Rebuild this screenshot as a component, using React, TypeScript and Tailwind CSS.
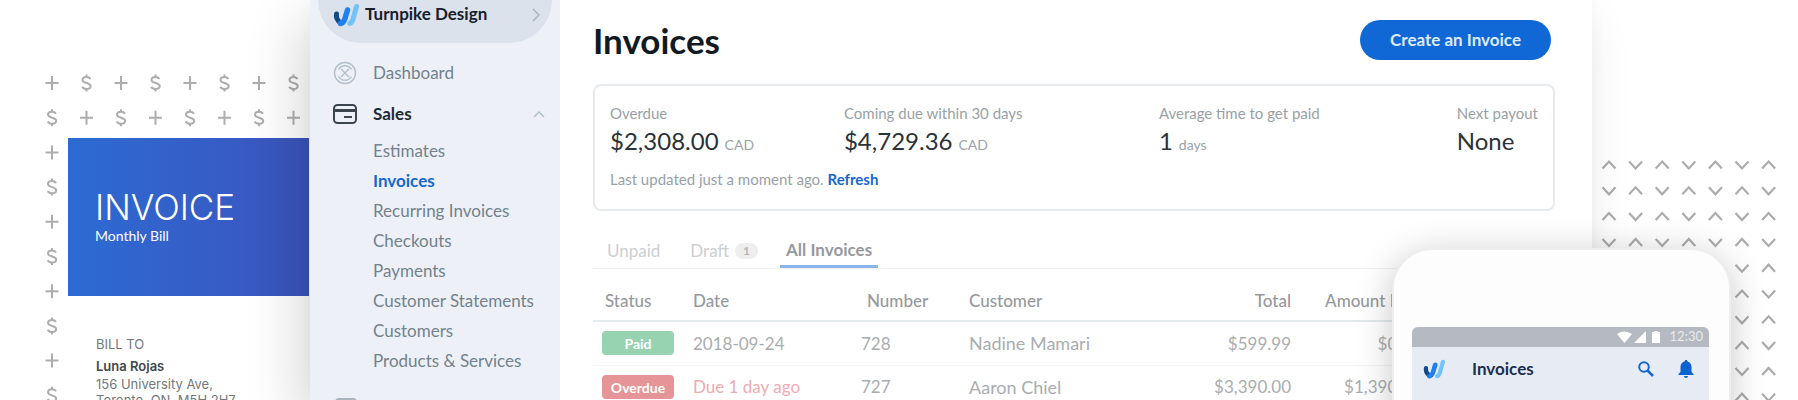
import React from "react";

const COIN_ROWS = 12;
const COIN_COLS = 8;
const ARROW_ROWS = 11;
const ARROW_COLS = 7;

function CoinPattern() {
  const cells = [];
  for (let r = 0; r < COIN_ROWS; r++) {
    for (let c = 0; c < COIN_COLS; c++) {
      const x = 12 + c * 34.5;
      const y = 12 + r * 34.7;
      const plus = (r + c) % 2 === 0;
      cells.push(
        plus ? (
          <path key={`${r}-${c}`} d={`M${x - 6.5} ${y}h13M${x} ${y - 7}v14`} />
        ) : (
          <path
            key={`${r}-${c}`}
            d={`M${x + 4} ${y - 4}c-1-1.6-2.4-2-4-2c-2.400 0-4 1.100-4 2.900c0 4 8.200 2.300 8.200 6.200c0 2-1.800 3-4.200 3c-1.900 0-3.400-.7-4.300-2.300M${x} ${y - 8.500}v2.500M${x} ${y + 6}v2.500`}
          />
        ),
      );
    }
  }
  return (
    <svg width="270" height="400" viewBox="0 0 270 400" fill="none" stroke="#adadad" strokeWidth="2" aria-hidden="true">
      {cells}
    </svg>
  );
}

function ArrowPattern() {
  const cells = [];
  for (let r = 0; r < ARROW_ROWS; r++) {
    for (let c = 0; c < ARROW_COLS; c++) {
      const x = 9 + c * 26.6;
      const y = 8 + r * 25.8;
      const dy = (r + c) % 2 === 0 ? -7 : 7;
      cells.push(<path key={`${r}-${c}`} d={`M${x - 6.5} ${y - dy / 2}l6.500 ${dy}l6.500 ${-dy}`} />);
    }
  }
  return (
    <svg width="180" height="280" viewBox="0 0 180 280" fill="none" stroke="#acacac" strokeWidth="2.200" aria-hidden="true">
      {cells}
    </svg>
  );
}

function WaveLogo({ className }: { className: string }) {
  return (
    <svg className={className} viewBox="0 0 28 26" fill="none" strokeLinecap="round" aria-hidden="true">
      <path d="M4.500 12c-.5 3 .5 6 3.500 8.500" stroke="#124a86" strokeWidth="5" />
      <path d="M24.500 4.500l-3.300 12c-.8 2.800-1.700 4.400-3.400 5" stroke="#74c2fa" strokeWidth="5" />
      <path d="M15.500 8l-2.700 9c-.8 2.500-2 4.100-4.300 4.500" stroke="#2180f0" strokeWidth="5.500" />
    </svg>
  );
}

const salesLinks = [
  "Estimates",
  "Invoices",
  "Recurring Invoices",
  "Checkouts",
  "Payments",
  "Customer Statements",
  "Customers",
  "Products & Services",
];

function Sidebar() {
  return (
    <nav className="h-full w-[250px] shrink-0 bg-[#edf1f7] px-2 text-[17px] text-[#73828c]">
      <button className="flex h-[43px] w-full items-start rounded-b-full bg-[#dbe2ec] pr-3 pl-[14px] text-left">
        <WaveLogo className="mt-[2px] h-[26px] w-7" />
        <span className="ml-[5px] grow leading-7 font-bold text-[#15202b]">Turnpike Design</span>
        <svg className="mt-2 h-[14px] w-2" viewBox="0 0 8 14" fill="none" stroke="#a9b6c1" strokeWidth="1.500" aria-hidden="true">
          <path d="M1 1l6 6l-6 6" />
        </svg>
      </button>
      <a href="#dashboard" className="mt-4 flex h-7 items-center pl-[15px]">
        <svg className="h-6 w-6" viewBox="0 0 24 24" fill="none" stroke="#b4c1cb" strokeWidth="1.500" aria-hidden="true">
          <circle cx="12" cy="12" r="10.500" />
          <path d="M5.500 8.500a7.500 7.500 0 0 1 13 0M5.500 15.500a7.500 7.500 0 0 0 13 0" />
          <path d="M8 8l8 8M16 8l-8 8" />
        </svg>
        <span className="ml-4">Dashboard</span>
      </a>
      <a href="#sales" className="mt-[13px] flex h-7 items-center pr-[7px] pl-[15px] font-bold text-[#1d2a35]">
        <svg className="h-5 w-6" viewBox="0 0 24 20" fill="none" stroke="#3b454e" strokeWidth="2" aria-hidden="true">
          <rect x="1" y="1" width="22" height="18" rx="3.500" />
          <path d="M1 6.500h22" strokeWidth="3" />
          <path d="M11 13h8" />
        </svg>
        <span className="ml-4 grow">Sales</span>
        <svg className="h-2 w-3" viewBox="0 0 12 8" fill="none" stroke="#b3c0ca" strokeWidth="1.500" aria-hidden="true">
          <path d="M1 7l5-5l5 5" />
        </svg>
      </a>
      <ul className="mt-2 pl-[55px]">
        {salesLinks.map((label) => (
          <li key={label} className="h-[30px] leading-[30px]">
            <a href={`#${label}`} className={label === "Invoices" ? "font-bold text-[#1668cf]" : ""}>
              {label}
            </a>
          </li>
        ))}
      </ul>
      <div className="mt-[22px] ml-[17px] h-5 w-[22px] rounded-sm border-2 border-[#a9b4bd]" />
    </nav>
  );
}

function Stat({ label, value, unit }: { label: string; value: string; unit?: string }) {
  return (
    <div className="whitespace-nowrap">
      <dt className="text-[15px] leading-4 text-[#98a1a8]">{label}</dt>
      <dd className="mt-[6px] text-[24px] leading-7 text-[#2b3238]">
        {value}
        {unit && <span className="ml-[6px] text-[14px] text-[#99a3a9]">{unit}</span>}
      </dd>
    </div>
  );
}

const rows = [
  { status: "Paid", badge: "bg-[#97d3b1]", date: "2018-09-24", dateColor: "", number: "728", customer: "Nadine Mamari", total: "$599.99", due: "$0.00" },
  { status: "Overdue", badge: "bg-[#e59498]", date: "Due 1 day ago", dateColor: "text-[#efabb2]", number: "727", customer: "Aaron Chiel", total: "$3,390.00", due: "$1,390.00" },
];

function InvoiceTable() {
  return (
    <table className="w-full table-fixed text-left text-[17px] text-[#a9adb0]">
      <colgroup>
        <col className="w-[96px]" />
        <col className="w-[168px]" />
        <col className="w-[106px]" />
        <col />
        <col className="w-[110px]" />
        <col className="w-[130px]" />
        <col className="w-[134px]" />
      </colgroup>
      <thead>
        <tr className="h-[52px] border-b-2 border-[#e4e9ec] text-[#96999d]">
          <th className="pt-3 pl-3 font-medium">Status</th>
          <th className="pt-3 pl-1 font-medium">Date</th>
          <th className="pt-3 pl-[10px] font-medium">Number</th>
          <th className="pt-3 pl-[6px] font-medium">Customer</th>
          <th className="pt-3 text-right font-medium">Total</th>
          <th className="pt-3 text-right font-medium">Amount Due</th>
          <th aria-label="Actions" />
        </tr>
      </thead>
      <tbody>
        {rows.map((row) => (
          <tr key={row.number} className="h-11 border-b border-[#f3f4f5]">
            <td className="pl-[9px]">
              <span className={`${row.badge} flex h-6 w-[72px] items-center justify-center rounded-sm text-[14px] font-bold text-white`}>
                {row.status}
              </span>
            </td>
            <td className={`${row.dateColor} pl-1`}>{row.date}</td>
            <td className="pl-1">{row.number}</td>
            <td className="pl-[6px] text-[18px]">{row.customer}</td>
            <td className="text-right">{row.total}</td>
            <td className="text-right">{row.due}</td>
            <td />
          </tr>
        ))}
      </tbody>
    </table>
  );
}

function AppWindow() {
  return (
    <div className="z-10 flex min-w-0 grow bg-white shadow-[-14px_20px_50px_rgba(0,0,0,0.14),0_0_16px_rgba(0,0,0,0.03)]">
      <Sidebar />
      <main className="min-w-0 grow pr-[37px] pl-[33px]">
        <header className="flex items-center justify-between pt-5 pr-1">
          <h1 className="text-[35px] leading-10 font-bold text-[#111a22]">Invoices</h1>
          <button className="h-10 rounded-full bg-[#0f68d6] px-[30px] text-[17px] font-bold text-[#dfeafb]">Create an Invoice</button>
        </header>
        <section className="mt-6 h-[127px] rounded-lg border-2 border-[#e8ebed] px-[15px] pt-[19px]">
          <dl className="grid grid-cols-[234fr_315fr_298fr_80fr]">
            <Stat label="Overdue" value="$2,308.00" unit="CAD" />
            <Stat label="Coming due within 30 days" value="$4,729.36" unit="CAD" />
            <Stat label="Average time to get paid" value="1" unit="days" />
            <Stat label="Next payout" value="None" />
          </dl>
          <p className="mt-[10px] text-[15px] leading-5 text-[#98a1a8]">
            Last updated just a moment ago.{" "}
            <button className="font-bold text-[#1668cf]">Refresh</button>
          </p>
        </section>
        <div role="tablist" className="mt-[22px] flex h-9 items-stretch border-b border-[#eff1f2] pl-[14px] text-[17px] text-[#cccfd1]">
          <button role="tab">Unpaid</button>
          <button role="tab" className="ml-[30px] flex items-center gap-[6px]">
            Draft
            <span className="rounded-full bg-[#eeeeee] px-2 text-[12px] leading-4 font-bold text-[#b5b5b5]">1</span>
          </button>
          <button role="tab" aria-selected="true" className="ml-[22px] border-b-[3px] border-[#8bb5e8] px-[6px] pt-[2px] font-bold text-[#96999d]">
            All Invoices
          </button>
        </div>
        <InvoiceTable />
      </main>
    </div>
  );
}

function Phone() {
  return (
    <div className="absolute top-[248px] right-[67px] z-20 h-[600px] w-[339px] rounded-t-[40px] border-2 border-[#eeeeef] bg-[#fdfdfd] pt-[77px] pr-5 pl-[18px] shadow-[0_6px_36px_rgba(0,0,0,0.22)]">
      <div className="h-full overflow-hidden rounded-t-md bg-[#e7ecf4]">
        <div className="flex h-5 items-center justify-end gap-[5px] bg-[#b5b9c1] pr-[6px] text-[13px] text-[#e9ebee]">
          <svg className="h-3 w-[52px]" viewBox="0 0 52 12" fill="white" aria-hidden="true">
            <path d="M4 3q7-5 15 0l-7.500 9z" />
            <path d="M33 0v12h-12z" />
            <path d="M39 1h2v-1h4v1h2v11h-8z" />
          </svg>
          12:30
        </div>
        <div className="flex h-[43px] items-center pr-[15px] pl-[10px]">
          <WaveLogo className="h-[22px] w-6" />
          <span className="ml-[26px] grow text-[17px] font-bold text-[#1d2f50]">Invoices</span>
          <svg className="h-4 w-4" viewBox="0 0 16 16" fill="none" stroke="#1767cc" strokeWidth="2" aria-hidden="true">
            <circle cx="6" cy="6" r="4.800" />
            <path d="M9.500 9.500l5.500 5.500" strokeWidth="2.500" />
          </svg>
          <svg className="ml-6 h-[18px] w-4" viewBox="0 0 16 18" fill="#0c62d0" aria-hidden="true">
            <path d="M8 0c1 0 1.500.6 1.500 1.600c2.500.7 4 2.800 4 5.400v5l2 2v1h-15v-1l2-2v-5c0-2.600 1.500-4.700 4-5.400c0-1 .5-1.600 1.500-1.600zM6 16h4c0 1.200-.9 2-2 2s-2-.8-2-2z" />
          </svg>
        </div>
      </div>
    </div>
  );
}

function PaperInvoice() {
  return (
    <article className="absolute top-[138px] right-px left-[68px] bg-white pb-10">
      <header className="h-[158px] bg-linear-to-r from-[#2a6bd3] to-[#3b54bd] pt-12 pl-[27px] text-white">
        <h2 className="font-['Inter'] text-[35px] leading-[42px] font-light">INVOICE</h2>
        <p className="text-[14px] leading-4">Monthly Bill</p>
      </header>
      <address className="pt-9 pl-7 font-['Inter'] text-[13px] leading-4 text-[#72787d] not-italic">
        <div className="leading-6">BILL TO</div>
        <div className="leading-5 font-semibold text-[#42474c]">Luna Rojas</div>
        <div>156 University Ave,</div>
        <div>Toronto, ON, M5H 2H7</div>
      </address>
    </article>
  );
}

export default function App() {
  return (
    <div className="relative flex h-screen overflow-hidden bg-white font-['Lato',sans-serif]">
      <div className="relative w-[310px] shrink-0 pt-[71px] pl-10">
        <CoinPattern />
        <PaperInvoice />
      </div>
      <AppWindow />
      <div className="w-[206px] shrink-0 pt-[157px] pl-2">
        <ArrowPattern />
      </div>
      <Phone />
    </div>
  );
}
